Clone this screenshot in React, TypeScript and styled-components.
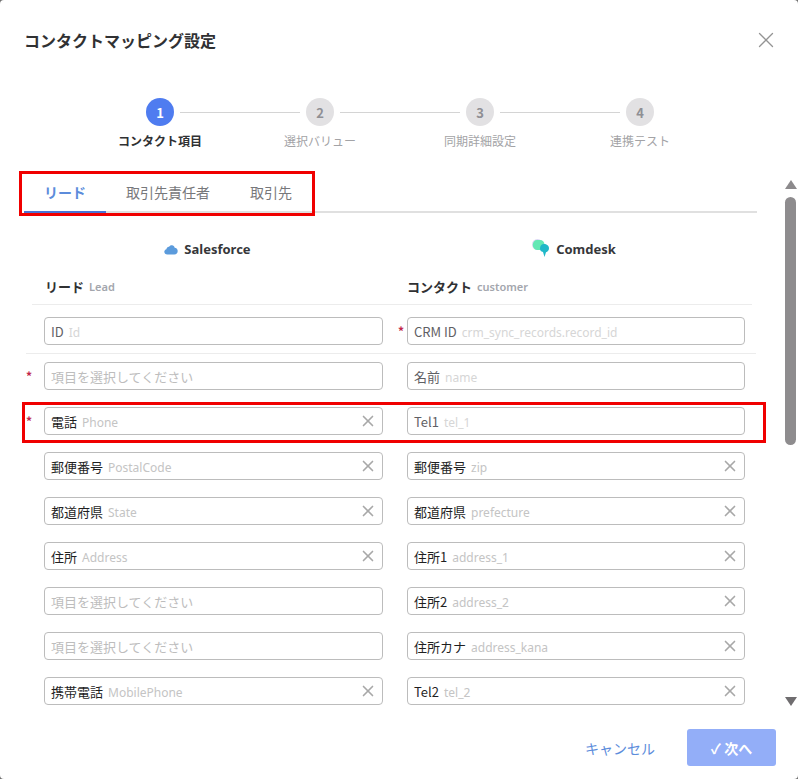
import React from 'react';
import styled, { createGlobalStyle } from 'styled-components';
import { X } from 'lucide-react';

const GlobalStyle = createGlobalStyle`
  html, body {
    margin: 0;
    padding: 0;
    background: #6f6f6f;
  }
  body {
    font-family: "Noto Sans CJK JP", "Noto Sans", sans-serif;
    color: #303133;
  }
  * {
    box-sizing: border-box;
  }
`;

const Modal = styled.div`
  position: relative;
  width: 798px;
  height: 779px;
  overflow: hidden;
  display: flex;
  flex-direction: column;
  background: #fff;
  border-radius: 4px;
`;

const Header = styled.header`
  height: 82px;
  padding: 0 24px 2px;
  display: flex;
  align-items: center;
  justify-content: space-between;
`;

const Title = styled.h1`
  margin: 0;
  font-size: 16px;
  line-height: 24px;
  font-weight: 700;
  color: #303133;
`;

const CloseButton = styled.div`
  display: flex;
  color: #949494;
  margin-right: -5px;
`;

const StepTrack = styled.div`
  margin-top: 16px;
  padding-left: 146px;
  display: flex;
  align-items: center;
`;

const StepCircle = styled.div<{ $active?: boolean }>`
  width: 28px;
  height: 28px;
  border-radius: 50%;
  display: flex;
  align-items: center;
  justify-content: center;
  font-size: 13px;
  font-weight: 700;
  background: ${props => (props.$active ? '#4f7cf0' : '#e2e1e3')};
  color: ${props => (props.$active ? '#fff' : '#8f8f94')};
`;

const StepLine = styled.div`
  width: 120px;
  height: 1px;
  margin: 0 6px;
  background: #d4d4d4;
`;

const StepLabels = styled.div`
  margin-top: 6px;
  padding-left: 80px;
  display: grid;
  grid-template-columns: repeat(4, 160px);
  height: 21px;
`;

const StepLabel = styled.div<{ $active?: boolean }>`
  text-align: center;
  font-size: 12px;
  line-height: 18px;
  font-weight: ${props => (props.$active ? 700 : 400)};
  color: ${props => (props.$active ? '#303133' : '#a3a3a6')};
`;

const Body = styled.div`
  height: 559px;
  display: flex;
`;

const Content = styled.div`
  width: 784px;
  padding: 20px 0 0 24px;
  overflow: hidden;
`;

const Tabs = styled.div`
  width: 733px;
  height: 40px;
  display: flex;
  border-bottom: 2px solid #e0e0e0;
`;

const Tab = styled.div<{ $active?: boolean }>`
  height: 40px;
  padding: 0 20px;
  font-size: 14px;
  line-height: 38px;
  font-weight: ${props => (props.$active ? 700 : 400)};
  color: ${props => (props.$active ? '#5c8cdb' : '#77787b')};
  border-bottom: 2px solid ${props => (props.$active ? '#4a74d6' : 'transparent')};
`;

const Columns = styled.div`
  display: grid;
  grid-template-columns: 363px 370px;
`;

const ServiceHead = styled.div`
  margin-top: 24px;
  height: 24px;
  padding-left: 4px;
  display: flex;
  align-items: center;
  justify-content: center;
  gap: 6px;
  font-family: "Noto Sans", "Noto Sans CJK JP", sans-serif;
  font-size: 13px;
  font-weight: 700;
  color: #36373a;
`;

const ColumnHead = styled.div<{ $left: number }>`
  margin-top: 15px;
  height: 20px;
  padding-left: ${props => props.$left}px;
  display: flex;
  align-items: center;
  gap: 5px;
`;

const ObjectName = styled.span`
  font-size: 13px;
  font-weight: 700;
  color: #303133;
`;

const ObjectKey = styled.span`
  font-family: "Noto Sans", sans-serif;
  font-size: 11px;
  font-weight: 600;
  color: #a3a6ad;
`;

const Divider = styled.div<{ $left: number; $width: number; $top?: number }>`
  height: 1px;
  margin-top: ${props => props.$top ?? 0}px;
  margin-left: ${props => props.$left}px;
  width: ${props => props.$width}px;
  background: #ececec;
`;

const Row = styled.div<{ $top: number; $bottom: number }>`
  padding: ${props => props.$top}px 0 ${props => props.$bottom}px;
  display: grid;
  grid-template-columns: 363px 370px;
`;

const Cell = styled.div`
  display: flex;
`;

const Required = styled.span<{ $side: 'left' | 'right' }>`
  width: 20px;
  height: 28px;
  padding: ${props => (props.$side === 'left' ? '0 0 0 2px' : '0 3px 0 0')};
  text-align: ${props => props.$side};
  font-size: 12px;
  line-height: 28px;
  font-weight: 700;
  color: #c2274b;
`;

const Select = styled.div<{ $width: number }>`
  width: ${props => props.$width}px;
  height: 28px;
  padding: 0 5px 0 6px;
  display: flex;
  align-items: center;
  gap: 5px;
  border: 1px solid #bcbcbc;
  border-radius: 4px;
  background: #fff;
`;

const ValueLabel = styled.span<{ $muted?: boolean }>`
  font-size: 13px;
  color: ${props => (props.$muted ? '#5f6064' : '#1f1f1f')};
`;

const ValueKey = styled.span<{ $faint?: boolean }>`
  flex: 1;
  margin-top: 2px;
  font-family: "Noto Sans", sans-serif;
  font-size: 12px;
  color: ${props => (props.$faint ? '#d6d6d6' : '#c4c4c4')};
`;

const Placeholder = styled.span`
  font-size: 13px;
  color: #bdbdbd;
`;

const ClearIcon = styled.span`
  display: flex;
  color: #a8a8a8;
`;

const ScrollRail = styled.div`
  width: 13px;
  padding-top: 27px;
  display: flex;
  flex-direction: column;
  align-items: center;
`;

const ArrowUp = styled.div`
  width: 0;
  height: 0;
  border-left: 6.5px solid transparent;
  border-right: 6.5px solid transparent;
  border-bottom: 9px solid #8c8a8c;
`;

const ScrollThumb = styled.div`
  width: 11px;
  height: 248px;
  margin-top: 8px;
  border-radius: 6px;
  background: #8e8c8e;
`;

const ArrowDown = styled.div`
  width: 0;
  height: 0;
  margin-top: 252px;
  border-left: 6.5px solid transparent;
  border-right: 6.5px solid transparent;
  border-top: 9px solid #6f6d6f;
`;

const Footer = styled.footer`
  padding: 17px 22px 0 0;
  display: flex;
  justify-content: flex-end;
  align-items: center;
  gap: 32px;
`;

const CancelButton = styled.button`
  padding: 0;
  border: none;
  background: none;
  font-family: inherit;
  font-size: 14px;
  color: #5c8cdb;
`;

const NextButton = styled.button`
  width: 89px;
  height: 37px;
  border: none;
  border-radius: 3px;
  background: #93aef8;
  color: #fff;
  font-family: inherit;
  font-size: 14px;
  font-weight: 700;
`;

const Annotation = styled.div<{ $x: number; $y: number; $w: number; $h: number }>`
  position: absolute;
  left: ${props => props.$x}px;
  top: ${props => props.$y}px;
  width: ${props => props.$w}px;
  height: ${props => props.$h}px;
  border: 3px solid #f00000;
  pointer-events: none;
`;

type Field = { label?: string; field?: string; required?: boolean; clear?: boolean; muted?: boolean };

const steps = ['コンタクト項目', '選択バリュー', '同期詳細設定', '連携テスト'];

const rows: [Field, Field][] = [
  [
    { label: 'ID', field: 'Id', muted: true },
    { label: 'CRM ID', field: 'crm_sync_records.record_id', required: true, muted: true },
  ],
  [{ required: true }, { label: '名前', field: 'name', muted: true }],
  [
    { label: '電話', field: 'Phone', required: true, clear: true },
    { label: 'Tel1', field: 'tel_1', muted: true },
  ],
  [
    { label: '郵便番号', field: 'PostalCode', clear: true },
    { label: '郵便番号', field: 'zip', clear: true },
  ],
  [
    { label: '都道府県', field: 'State', clear: true },
    { label: '都道府県', field: 'prefecture', clear: true },
  ],
  [
    { label: '住所', field: 'Address', clear: true },
    { label: '住所1', field: 'address_1', clear: true },
  ],
  [{}, { label: '住所2', field: 'address_2', clear: true }],
  [{}, { label: '住所カナ', field: 'address_kana', clear: true }],
  [
    { label: '携帯電話', field: 'MobilePhone', clear: true },
    { label: 'Tel2', field: 'tel_2', clear: true },
  ],
];

const SalesforceLogo = () => (
  <svg width="14" height="11" viewBox="0 0 14 11">
    <path
      d="M3.4 10.5C1.5 10.5 0.3 9.3 0.3 7.8c0-1.3 0.9-2.3 2.1-2.6C2.6 3.7 3.7 2.7 5 2.8 5.7 1.6 6.8 1 8 1.2c1.4 0.2 2.4 1.2 2.7 2.5 1.8 0.2 3 1.6 3 3.3 0 2-1.4 3.5-3.3 3.5z"
      fill="#5b9bdc"
    />
  </svg>
);

const ComdeskLogo = () => (
  <svg width="18" height="20" viewBox="0 0 18 20">
    <circle cx="5.5" cy="5.5" r="5.5" fill="#dcd8f5" />
    <path d="M5 1h3c2.500 0 4.500 2 4.500 4.800S10.500 11 8 11H5C2.500 11 .8 8.500 .8 5.800S2.500 1 5 1z" fill="#63e8b4" />
    <path d="M12 5c2.800 0 5 1.800 5 4.200 0 2-1.300 3.500-3 4L12.500 18 11 13C9 12.700 8 11.500 8 9.500 8 7 9.500 5 12 5z" fill="#20b8c8" />
  </svg>
);

const FieldSelect: React.FC<{ item: Field; side: 'left' | 'right' }> = ({ item, side }) => (
  <Cell>
    <Required $side={side}>{item.required ? '*' : ''}</Required>
    <Select $width={side === 'left' ? 339 : 338}>
      {item.label ? (
        <>
          <ValueLabel $muted={item.muted}>{item.label}</ValueLabel>
          <ValueKey $faint={item.muted}>{item.field}</ValueKey>
        </>
      ) : (
        <Placeholder>項目を選択してください</Placeholder>
      )}
      {item.clear && (
        <ClearIcon>
          <X size={18} strokeWidth={2.2} />
        </ClearIcon>
      )}
    </Select>
  </Cell>
);

export default function App() {
  return (
    <>
      <GlobalStyle />
      <Modal>
        <Header>
          <Title>コンタクトマッピング設定</Title>
          <CloseButton>
            <X size={26} strokeWidth={1.2} />
          </CloseButton>
        </Header>

        <StepTrack>
          {steps.map((_, i) => (
            <React.Fragment key={i}>
              <StepCircle $active={i === 0}>{i + 1}</StepCircle>
              {i < steps.length - 1 && <StepLine />}
            </React.Fragment>
          ))}
        </StepTrack>
        <StepLabels>
          {steps.map((step, i) => (
            <StepLabel key={step} $active={i === 0}>
              {step}
            </StepLabel>
          ))}
        </StepLabels>

        <Body>
          <Content>
            <Tabs>
              <Tab $active>リード</Tab>
              <Tab>取引先責任者</Tab>
              <Tab>取引先</Tab>
            </Tabs>

            <Columns>
              <ServiceHead>
                <SalesforceLogo />
                Salesforce
              </ServiceHead>
              <ServiceHead>
                <ComdeskLogo />
                Comdesk
              </ServiceHead>
              <ColumnHead $left={21}>
                <ObjectName>リード</ObjectName>
                <ObjectKey>Lead</ObjectKey>
              </ColumnHead>
              <ColumnHead $left={20}>
                <ObjectName>コンタクト</ObjectName>
                <ObjectKey>customer</ObjectKey>
              </ColumnHead>
            </Columns>
            <Divider $left={8} $width={720} $top={8} />

            {rows.map(([left, right], i) => (
              <React.Fragment key={i}>
                <Row $top={i === 0 ? 12 : i === 1 ? 8 : 0} $bottom={i === 0 ? 8 : 17}>
                  <FieldSelect item={left} side="left" />
                  <FieldSelect item={right} side="right" />
                </Row>
                {i === 0 && <Divider $left={2} $width={730} />}
              </React.Fragment>
            ))}
          </Content>
          <ScrollRail>
            <ArrowUp />
            <ScrollThumb />
            <ArrowDown />
          </ScrollRail>
        </Body>

        <Footer>
          <CancelButton>キャンセル</CancelButton>
          <NextButton>✓ 次へ</NextButton>
        </Footer>

        <Annotation $x={19} $y={171} $w={296} $h={45} />
        <Annotation $x={22} $y={402} $w={744} $h={41} />
      </Modal>
    </>
  );
}
